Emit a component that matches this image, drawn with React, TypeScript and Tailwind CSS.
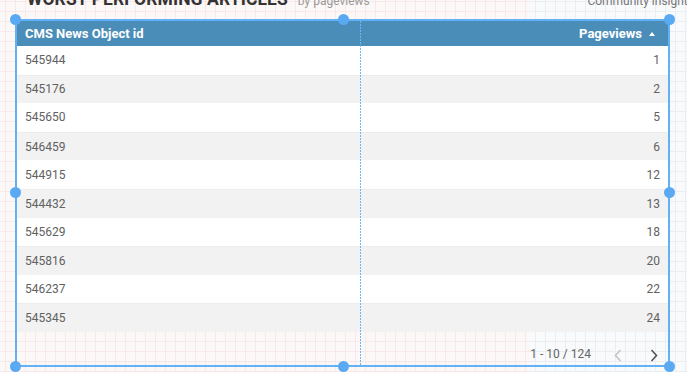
import React from "react";

const rows: [string, number][] = [
  ["545944", 1],
  ["545176", 2],
  ["545650", 5],
  ["546459", 6],
  ["544915", 12],
  ["544432", 13],
  ["545629", 18],
  ["545816", 20],
  ["546237", 22],
  ["545345", 24],
];

function Handle({ pos }: { pos: string }) {
  return <div className={`absolute w-[11px] h-[11px] rounded-full bg-[#5aaaf3] ${pos}`} />;
}

export default function App() {
  return (
    <div className="w-[687px] h-[372px] overflow-hidden grid font-['Roboto',sans-serif]">
      {/* canvas background */}
      <div className="col-start-1 row-start-1 flex">
        <div className="w-[530px] h-full bg-[#fdf8f8] bg-[linear-gradient(to_right,#f7e9e9_1px,transparent_1px),linear-gradient(to_bottom,#f7e9e9_1px,transparent_1px)] bg-[size:10px_10px] bg-[position:5px_1px]" />
        <div className="flex-1 h-full bg-[#f9fafc] bg-[linear-gradient(to_right,#eaedf2_1px,transparent_1px),linear-gradient(to_bottom,#eaedf2_1px,transparent_1px)] bg-[size:10px_10px] bg-[position:5px_1px]" />
      </div>

      {/* content */}
      <div className="col-start-1 row-start-1 flex flex-col">
        <div className="-mt-[11px] h-[30px] flex items-baseline pl-[27px] whitespace-nowrap">
          <span className="text-[17.5px] leading-[20px] font-bold text-[#333333] tracking-[0.1px]">WORST PERFORMING ARTICLES</span>
          <span className="ml-[10px] text-[12px] text-[#9a9a9a]">by pageviews</span>
          <span className="ml-auto text-[12px] text-[#777777] -mr-[7px]">Community insights</span>
        </div>

        <div className="ml-[15px] w-[655px] h-[348px] border-2 border-[#62b0f5] relative flex flex-col">
          {/* header */}
          <div className="h-[25px] bg-[#4b8db9] flex items-center text-white text-[13px] font-bold">
            <div className="w-[343px] pl-[8px]">CMS News Object id</div>
            <div className="flex-1 flex items-center justify-end pr-[13px]">
              <span>Pageviews</span>
              <svg width="6" height="4" viewBox="0 0 6 4" className="ml-[7px]">
                <path d="M0 4 L3 0 L6 4 Z" fill="#ffffff" />
              </svg>
            </div>
          </div>

          {/* rows */}
          {rows.map(([id, v], i) => (
            <div
              key={id}
              className={`h-[28.6px] flex items-center text-[12px] text-[#616161] ${
                i % 2 === 1 ? "bg-[#f2f2f2] border-t border-[#ececec]" : "bg-white"
              }`}
            >
              <div className="w-[343px] pl-[8px]">{id}</div>
              <div className="flex-1 text-right pr-[8px]">{v}</div>
            </div>
          ))}

          {/* footer */}
          <div className="flex-1 flex items-end justify-end pb-[1px] pr-[10px] text-[12px] text-[#666666]">
            <span className="mb-[1px]">1 - 10 / 124</span>
            <svg width="8" height="13" viewBox="0 0 8 13" className="ml-[23px] mb-[2px]">
              <path d="M6.5 1 L1.5 6.5 L6.5 12" fill="none" stroke="#c4c4c4" strokeWidth="1.6" />
            </svg>
            <svg width="8" height="13" viewBox="0 0 8 13" className="ml-[28px] mb-[2px]">
              <path d="M1.5 1 L6.5 6.5 L1.5 12" fill="none" stroke="#555555" strokeWidth="1.6" />
            </svg>
          </div>

          {/* column guide */}
          <div className="absolute left-[343px] top-0 bottom-0 w-[1px] bg-[linear-gradient(to_bottom,#6ab6f7_2px,transparent_2px)] bg-[size:1px_3px]" />

          <Handle pos="-left-[7px] -top-[7px]" />
          <Handle pos="left-[321px] -top-[7px]" />
          <Handle pos="-right-[7px] -top-[7px]" />
          <Handle pos="-left-[7px] top-[166px]" />
          <Handle pos="-right-[7px] top-[166px]" />
          <Handle pos="-left-[7px] -bottom-[7px]" />
          <Handle pos="left-[321px] -bottom-[7px]" />
          <Handle pos="-right-[7px] -bottom-[7px]" />
        </div>
      </div>
    </div>
  );
}
